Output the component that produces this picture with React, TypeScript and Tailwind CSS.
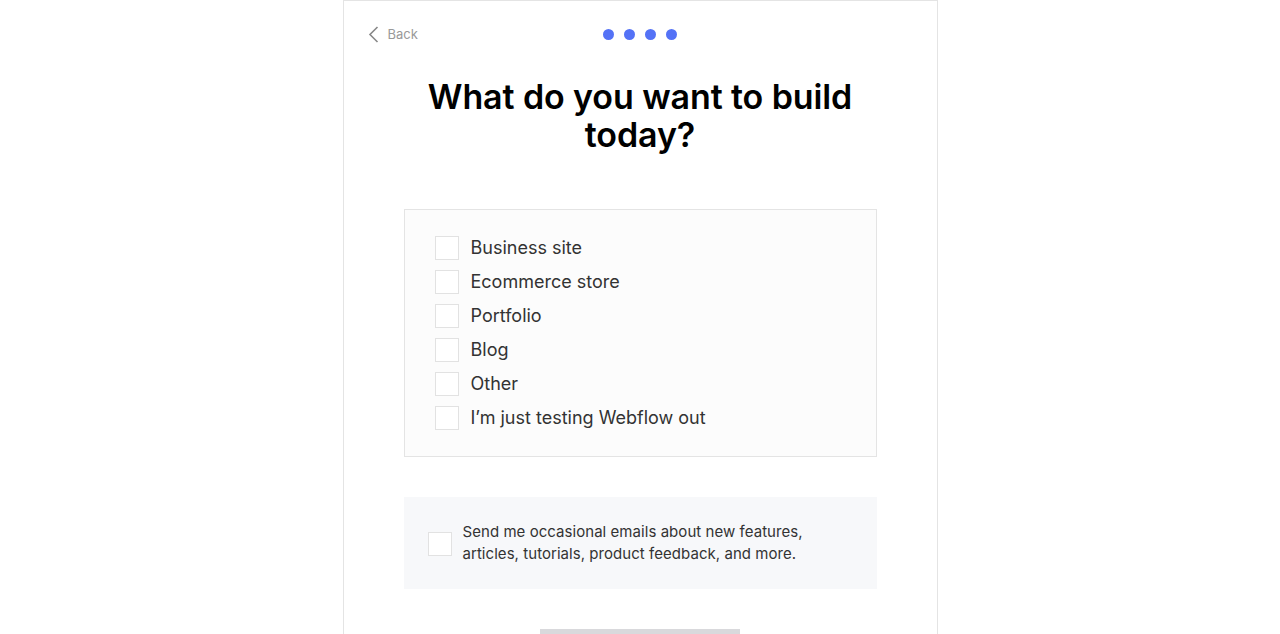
export default function App() {
  const options = [
    "Business site",
    "Ecommerce store",
    "Portfolio",
    "Blog",
    "Other",
    "I’m just testing Webflow out",
  ];

  return (
    <div className="min-h-screen bg-white flex justify-center" style={{ fontFamily: "Inter, 'Noto Sans', sans-serif" }}>
      <div className="w-[595px] h-[634px] overflow-hidden border border-b-0 border-[#e4e4e4] flex flex-col">
        {/* top bar */}
        <div className="relative h-[67px] shrink-0 flex items-center px-6">
          <button className="flex items-center gap-[9px] text-[13px] text-[#999]">
            <svg width="11" height="17" viewBox="0 0 11 17" fill="none">
              <path d="M9.5 1 L2 8.5 L9.5 16" stroke="#888" strokeWidth="1.6" />
            </svg>
            Back
          </button>
          <div className="absolute left-1/2 -translate-x-1/2 top-[28px] flex gap-[10px]">
            {[0, 1, 2, 3].map((i) => (
              <span key={i} className="block w-[11px] h-[11px] rounded-full bg-[#5472f6]" />
            ))}
          </div>
        </div>

        <h1 className="shrink-0 text-center text-[34px] leading-[38px] font-semibold text-black tracking-[-0.1px] mt-[10px] px-[70px]">
          What do you want to build today?
        </h1>

        <div className="shrink-0 px-[60px] mt-[55px]">
          {/* options */}
          <div className="border border-[#e4e4e4] bg-[#fcfcfc] pl-[30px] pt-[26px] pb-[26px] flex flex-col gap-[10px]">
            {options.map((o) => (
              <label key={o} className="flex items-center gap-3 h-6">
                <span className="block w-6 h-6 bg-white border border-[#e2e2e2]" />
                <span className="text-[18px] text-[#333] leading-6">{o}</span>
              </label>
            ))}
          </div>

          {/* email opt-in */}
          <div className="mt-10 bg-[#f7f8fa] h-[92px] flex items-center pl-6 gap-[11px]">
            <span className="block w-6 h-6 shrink-0 bg-white border border-[#e2e2e2] mt-[2px]" />
            <p className="text-[15px] leading-[22px] text-[#333] tracking-[0.05px]">
              Send me occasional emails about new features,
              <br />
              articles, tutorials, product feedback, and more.
            </p>
          </div>

          <div className="mx-auto mt-10 w-[200px] h-10 bg-[#d9d9dc]" />
        </div>
      </div>
    </div>
  );
}
